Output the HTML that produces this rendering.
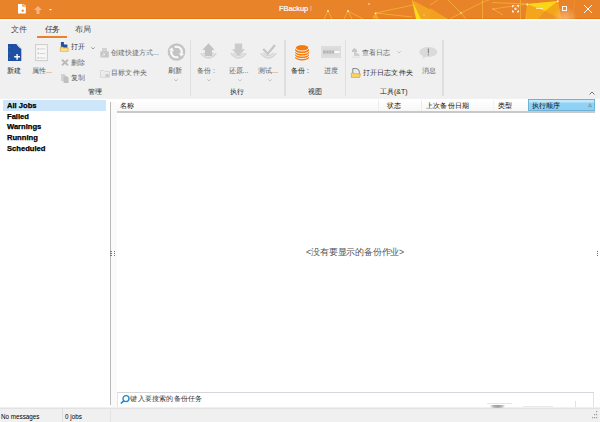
<!DOCTYPE html>
<html><head><meta charset="utf-8">
<style>
*{margin:0;padding:0;box-sizing:border-box}
html,body{width:600px;height:422px;overflow:hidden;background:#f0f0f0;font-family:"Liberation Sans",sans-serif}
.a{position:absolute;white-space:nowrap}
.t{position:absolute;white-space:nowrap;font-size:7px;line-height:8px;color:#262626}
.d{color:#666}
svg{position:absolute;overflow:visible}
i{font-style:normal;display:inline-block;width:1em;text-align:center}
</style></head><body>

<div class="a" style="left:0;top:0;width:600px;height:19px;background:linear-gradient(#e8832a 0,#e8832a 17.5px,#e77512 18.5px)"></div>
<svg style="left:0;top:0" width="600" height="19" viewBox="0 0 600 19">
  <polygon points="412,0 448,19 421,19" fill="#f3a424"/>
  <polygon points="412,0 421,19 416,19" fill="#f9dc1a"/>
  <polygon points="430,8 448,19 430,19" fill="#f2a020" opacity="0.9"/>
  <polygon points="372,18 376,13 379,19" fill="#f0a52a"/>
  <polygon points="527,4 558,1 561.5,19 525,19" fill="#f4a51c"/>
  <polygon points="545,11 561.5,19 538,19" fill="#ee9424"/>
  <polygon points="527,4 558,1 545,11" fill="#fbd614"/>
  <g stroke="#f7b834" stroke-width="0.8" fill="none" opacity="0.9">
    <path d="M324 19 L328 11 L332 19"/>
    <path d="M344 19 L348 11 L352 19"/>
    <path d="M348 11 L363 19"/>
    <path d="M376 13 L413 5"/>
    <path d="M376 13 L412 17"/>
    <path d="M448 0 L461 13 L466 19"/>
    <path d="M461 13 L450 19"/>
    <path d="M461 13 L483 2 L500 -4"/>
    <path d="M482.5 0 V19"/>
    <path d="M493 9 L527 4"/>
    <path d="M493 9 L503 15"/>
    <path d="M430 5 L438 0"/>
    <path d="M520.4 0 V19"/>
    <path d="M492 2.5 L527 4"/>
    <path d="M575 0 L572 19" opacity="0.4"/>
  </g>
  <g fill="#fff3c8">
    <circle cx="328" cy="11" r="0.9"/><circle cx="348" cy="11" r="0.9"/><circle cx="369" cy="4" r="0.8"/>
    <circle cx="375.5" cy="13.3" r="0.9"/><circle cx="461" cy="13" r="0.8"/><circle cx="424" cy="15" r="0.6"/>
    <circle cx="527.4" cy="4.4" r="1"/><circle cx="557.8" cy="1.2" r="1"/><circle cx="493" cy="9" r="0.6"/>
  </g>
</svg>
<div class="a" style="left:550px;top:4px;width:30px;height:15px;background:radial-gradient(ellipse at 50% 100%,rgba(255,215,170,0.55) 0,rgba(255,215,170,0) 60%)"></div>

<svg style="left:18.3px;top:4.3px" width="9" height="10" viewBox="0 0 9 10"><path d="M0 0H4.3V2.6H7.8V9.5H0Z" fill="#fff"/><path d="M4.9 0.4L7.8 2" stroke="#fff" stroke-width="0.8"/><rect x="3.7" y="5.7" width="2" height="2" fill="#e8832a"/></svg>
<svg style="left:34px;top:6px" width="8" height="8" viewBox="0 0 8 8"><path d="M4 0L8 4H5.5V8H2.5V4H0Z" fill="#f3b586"/></svg>
<svg style="left:48.5px;top:8.5px" width="3" height="2" viewBox="0 0 3 2"><path d="M0 0H3L1.5 1.5Z" fill="#fff"/></svg>
<div class="a" style="left:279px;top:4px;font-size:7.4px;color:#fff;line-height:9px;-webkit-text-stroke:0.2px #fff">FBackup</div>
<div class="a" style="left:310px;top:4px;font-size:7px;color:#fbd7b0;line-height:9px">!</div>

<svg style="left:512.2px;top:4.7px" width="7" height="7.5" viewBox="0 0 7 7.5"><g fill="#fff4e0"><path d="M0 0.8Q0 0 0.8 0H2V1.2H1.2V2.2H0Z"/><path d="M7 0.8Q7 0 6.2 0H5V1.2H5.8V2.2H7Z"/><path d="M0 6.7Q0 7.5 0.8 7.5H2V6.3H1.2V5.3H0Z"/><path d="M7 6.7Q7 7.5 6.2 7.5H5V6.3H5.8V5.3H7Z"/></g><circle cx="3.5" cy="3.7" r="1.2" fill="#fde8d0"/></svg>
<div class="a" style="left:536px;top:8px;width:7px;height:0.9px;background:#fef0b8;opacity:0.85"></div>
<div class="a" style="left:561.5px;top:6px;width:5.5px;height:5px;border:0.9px solid #fff6ea"></div>
<svg style="left:584px;top:5px" width="8" height="8" viewBox="0 0 8 8"><path d="M0 0L8 8M8 0L0 8" stroke="#fff" stroke-width="1"/></svg>


<div class="a" style="left:0;top:19px;width:600px;height:2.3px;background:#f6fcfd"></div>
<div class="t" style="left:11px;top:25.5px;font-size:7.5px;color:#4a4a4a"><i>文</i><i>件</i></div>
<div class="t" style="left:44.5px;top:25.5px;font-size:7.5px;color:#333"><i>任</i><i>务</i></div>
<div class="t" style="left:75px;top:25.5px;font-size:7.5px;color:#4a4a4a"><i>布</i><i>局</i></div>
<div class="a" style="left:37px;top:36px;width:30px;height:1.6px;background:#e8832a"></div>


<div class="a" style="left:189.8px;top:40px;width:1.3px;height:56px;background:#dedede"></div>
<div class="a" style="left:284.3px;top:40px;width:1.3px;height:56px;background:#dedede"></div>
<div class="a" style="left:344.9px;top:40px;width:1.3px;height:56px;background:#dedede"></div>
<div class="a" style="left:442.3px;top:40px;width:1.3px;height:56px;background:#dedede"></div>


<div class="t" style="left:88px;top:88.2px"><i>管</i><i>理</i></div>
<div class="t" style="left:229.5px;top:88.2px"><i>执</i><i>行</i></div>
<div class="t" style="left:308px;top:88.2px"><i>视</i><i>图</i></div>
<div class="t" style="left:380px;top:88.2px"><i>工</i><i>具</i>(&amp;T)</div>
<svg style="left:589px;top:91px" width="6" height="4" viewBox="0 0 6 4"><path d="M0.5 3.5L3 1L5.5 3.5" stroke="#666" stroke-width="0.9" fill="none"/></svg>


<svg style="left:7.7px;top:43.7px" width="14" height="17" viewBox="0 0 14 17"><path d="M0 0H8.5L13.3 4.8V17H0Z" fill="#1f4fa3"/><path d="M8.8 0.7L12.6 4.5" stroke="#b4ccee" stroke-width="1"/><g fill="#5784c8"><rect x="1.2" y="3" width="0.9" height="0.9"/><rect x="1.2" y="8.3" width="0.9" height="0.9"/><rect x="1.2" y="14" width="0.9" height="0.9"/></g><path d="M6.2 12.8H12M9.1 9.9V15.7" stroke="#fff" stroke-width="1.4"/></svg>
<div class="t" style="left:7px;top:66.8px"><i>新</i><i>建</i></div>

<svg style="left:35px;top:43px" width="13" height="18" viewBox="0 0 13 18"><rect x="0.6" y="1.6" width="11.8" height="16" fill="#f7f7f7" stroke="#cfcfcf" stroke-width="1.1"/><g fill="#c2c2c2"><rect x="2.6" y="5" width="1.6" height="1.6"/><rect x="2.6" y="9.6" width="1.6" height="1.6"/><rect x="2.6" y="14.1" width="1.6" height="1.6"/></g><g fill="#d4d4d4"><rect x="5" y="5.4" width="5.2" height="1"/><rect x="5" y="10" width="5.2" height="1"/><rect x="5" y="14.5" width="5.2" height="1"/></g></svg>
<div class="t d" style="left:32px;top:66.8px"><i>属</i><i>性</i>...</div>

<svg style="left:59.6px;top:42.2px" width="9" height="10" viewBox="0 0 9 10"><path d="M0.9 0H3.9V2.6H7.4V6H0.9Z" fill="#1f50a2"/><path d="M0.35 5.1H3L3.8 5.8H8.2V9.3H0.35Z" fill="#f6d46e" stroke="#e6a63a" stroke-width="0.7"/><rect x="1.2" y="7" width="6.2" height="1.6" fill="#fbe6a6"/></svg>
<div class="t" style="left:71px;top:43px"><i>打</i><i>开</i></div>
<svg style="left:91px;top:46.5px" width="4" height="2.5" viewBox="0 0 4 2.5"><path d="M0.3 0.3L2 2L3.7 0.3" stroke="#777" stroke-width="0.7" fill="none"/></svg>

<svg style="left:60.5px;top:59px" width="8" height="7" viewBox="0 0 8 7"><path d="M1 0.8L7 6.2M7 0.8L1 6.2" stroke="#b9b9b9" stroke-width="1.9"/></svg>
<div class="t d" style="left:71px;top:58.5px"><i>删</i><i>除</i></div>

<svg style="left:61px;top:73.5px" width="8" height="9" viewBox="0 0 8 9"><path d="M0 0H3.5L4.5 1V7H0Z" fill="#d2d2d2"/><path d="M2.5 2.2H6L7.5 3.7V9H2.5Z" fill="#bfbfbf"/></svg>
<div class="t d" style="left:71px;top:73.8px"><i>复</i><i>制</i></div>

<svg style="left:100px;top:48px" width="9" height="10" viewBox="0 0 9 10"><rect x="2" y="0" width="5" height="4" fill="#d2d2d2"/><rect x="0.3" y="3.5" width="8.5" height="6" fill="#c6c6c6"/><path d="M1.8 8.5L4.5 5.8M3 5.8H4.5V7.3" stroke="#f4f4f4" stroke-width="0.8" fill="none"/></svg>
<div class="t d" style="left:111px;top:48.6px"><i>创</i><i>建</i><i>快</i><i>捷</i><i>方</i><i>式</i>...</div>

<svg style="left:99.5px;top:70px" width="10" height="8" viewBox="0 0 10 8"><path d="M0.5 0.5H3.8L4.8 1.5H9.5V7.3H0.5Z" fill="#ececec" stroke="#d4d4d4" stroke-width="0.9"/><rect x="5.5" y="4" width="3.2" height="2.8" fill="#c8c8c8"/></svg>
<div class="t d" style="left:111px;top:68.6px;font-size:7.2px"><i>目</i><i>标</i><i>文</i><i>件</i><i>夹</i></div>

<svg style="left:166.5px;top:43px" width="19" height="18" viewBox="0 0 19 18"><circle cx="9.5" cy="9" r="8.8" fill="#c4c4c4"/><path d="M7.69 4.02A5.3 5.3 0 0 1 14.62 10.37" stroke="#fafafa" stroke-width="2" fill="none"/><path d="M17.13 11.04L12.11 9.70L13.79 13.46Z" fill="#fafafa"/><path d="M11.31 13.98A5.3 5.3 0 0 1 4.38 7.63" stroke="#fafafa" stroke-width="2" fill="none"/><path d="M1.87 6.96L6.89 8.30L5.21 4.54Z" fill="#fafafa"/></svg>
<div class="t" style="left:168px;top:66.8px;color:#555"><i>刷</i><i>新</i></div>
<svg style="left:173.5px;top:78.5px" width="4" height="2.5" viewBox="0 0 4 2.5"><path d="M0.3 0.3L2 2L3.7 0.3" stroke="#999" stroke-width="0.6" fill="none"/></svg>


<svg style="left:200px;top:43px" width="17" height="17" viewBox="0 0 17 17"><path d="M0.8 10.2Q8.5 19.5 16.2 10.2" stroke="#d6d6d6" stroke-width="1.8" fill="none"/><path d="M3.2 10Q8.5 15.3 13.8 10" stroke="#d6d6d6" stroke-width="1.4" fill="none"/><path d="M8.5 0.3L14.6 7H12.1V13H4.9V7H2.4Z" fill="#c2c2c2"/></svg>
<div class="t d" style="left:197px;top:66.8px"><i>备</i><i>份</i> :</div>
<svg style="left:206.5px;top:79px" width="4" height="2.5" viewBox="0 0 4 2.5"><path d="M0.3 0.3L2 2L3.7 0.3" stroke="#aaa" stroke-width="0.6" fill="none"/></svg>

<svg style="left:230px;top:43px" width="17" height="17" viewBox="0 0 17 17"><path d="M0.8 10.2Q8.5 19.5 16.2 10.2" stroke="#d6d6d6" stroke-width="1.8" fill="none"/><path d="M3.2 10Q8.5 15.3 13.8 10" stroke="#d6d6d6" stroke-width="1.4" fill="none"/><path d="M8.5 13.3L14.9 6.3H12.2V0.5H4.8V6.3H2.1Z" fill="#cbcbcb"/></svg>
<div class="t d" style="left:228.5px;top:66.8px"><i>还</i><i>原</i>...</div>
<svg style="left:238px;top:79px" width="4" height="2.5" viewBox="0 0 4 2.5"><path d="M0.3 0.3L2 2L3.7 0.3" stroke="#aaa" stroke-width="0.6" fill="none"/></svg>

<svg style="left:260px;top:43px" width="17" height="17" viewBox="0 0 17 17"><path d="M0.8 10.2Q8.5 19.5 16.2 10.2" stroke="#d6d6d6" stroke-width="1.8" fill="none"/><path d="M3.2 10Q8.5 15.3 13.8 10" stroke="#d6d6d6" stroke-width="1.4" fill="none"/><path d="M3.2 6L7.8 10.8L15 2" stroke="#c6c6c6" stroke-width="2.3" fill="none"/></svg>
<div class="t d" style="left:258px;top:66.8px"><i>测</i><i>试</i>...</div>
<svg style="left:267.5px;top:79px" width="4" height="2.5" viewBox="0 0 4 2.5"><path d="M0.3 0.3L2 2L3.7 0.3" stroke="#aaa" stroke-width="0.6" fill="none"/></svg>


<svg style="left:295.3px;top:43.5px" width="15" height="17" viewBox="0 0 15 17"><rect x="0.2" y="4" width="13.8" height="9.5" fill="#f47a12"/><ellipse cx="7.1" cy="13.5" rx="6.9" ry="3" fill="#f47a12"/><path d="M0.2 6.8A6.9 2.8 0 0 0 14 6.8" stroke="#fff" stroke-width="0.9" fill="none"/><path d="M0.2 9.3A6.9 2.8 0 0 0 14 9.3" stroke="#fff" stroke-width="0.9" fill="none"/><path d="M0.2 11.8A6.9 2.8 0 0 0 14 11.8" stroke="#fff" stroke-width="0.9" fill="none"/><ellipse cx="7.1" cy="3.8" rx="6.7" ry="3.2" fill="#f47a12" stroke="#fff" stroke-width="0.9"/></svg>
<div class="t" style="left:291px;top:67px;color:#222"><i>备</i><i>份</i> :</div>

<svg style="left:321px;top:46px" width="20" height="12" viewBox="0 0 20 12"><rect x="0" y="0" width="20" height="12" fill="#dadada"/><rect x="1" y="1" width="18" height="10" fill="none" stroke="#e2e2e2" stroke-width="0.8"/><rect x="2" y="4.5" width="11" height="3" fill="#b4b4b4"/><g fill="#d0d0d0"><rect x="4.5" y="4.5" width="0.8" height="3"/><rect x="7.5" y="4.5" width="0.8" height="3"/><rect x="10.5" y="4.5" width="0.8" height="3"/></g><rect x="13.5" y="5" width="5" height="2" fill="#fafafa"/></svg>
<div class="t" style="left:323.5px;top:67px;color:#666"><i>进</i><i>度</i></div>


<svg style="left:350.7px;top:47.8px" width="10" height="10" viewBox="0 0 10 10"><path d="M1 2L3.5 0L6 2V4H1Z" fill="#c6c6c6"/><path d="M3 3L8.5 6.5V8H3Z" fill="#cfcfcf"/><rect x="1" y="8.7" width="8" height="0.8" fill="#dddddd"/></svg>
<div class="t d" style="left:361.5px;top:49px"><i>查</i><i>看</i><i>日</i><i>志</i></div>
<svg style="left:396.5px;top:51px" width="4" height="2.5" viewBox="0 0 4 2.5"><path d="M0.3 0.3L2 2L3.7 0.3" stroke="#aaa" stroke-width="0.6" fill="none"/></svg>

<svg style="left:350.7px;top:68.2px" width="10" height="10" viewBox="0 0 10 10"><path d="M1.8 0.5H5Q8.4 0.5 8.4 4.2V6.5H1.8Z" fill="#e6ecf6" stroke="#707070" stroke-width="0.8"/><path d="M0.4 5H3L3.8 5.8H9.4L8.7 9.4H0.4Z" fill="#f8d468" stroke="#e3a436" stroke-width="0.8"/></svg>
<div class="t" style="left:362.5px;top:69px;font-size:7.2px"><i>打</i><i>开</i><i>日</i><i>志</i><i>文</i><i>件</i><i>夹</i></div>

<svg style="left:419px;top:47px" width="19" height="12" viewBox="0 0 19 12"><ellipse cx="9.3" cy="5" rx="9" ry="5" fill="#dadada"/><path d="M4 8L3.5 11.5L8 9.5Z" fill="#dadada"/><rect x="8.8" y="1.5" width="1.2" height="4.8" fill="#8a8a8a"/><rect x="8.8" y="7.2" width="1.2" height="1.2" fill="#8a8a8a"/></svg>
<div class="t" style="left:421.5px;top:67px;font-size:7px;color:#5a5a5a"><i>消</i><i>息</i></div>


<div class="a" style="left:0;top:97.5px;width:600px;height:2px;background:linear-gradient(#f0f0f0,#f6f6f6)"></div>
<div class="a" style="left:0;top:99.3px;width:600px;height:308.2px;background:#fff"></div>
<div class="a" style="left:3px;top:100.4px;width:103.3px;height:10.4px;background:#cde6fa"></div>
<div class="a" style="left:7px;top:100.9px;font-size:7.6px;font-weight:bold;line-height:9px;color:#000;-webkit-text-stroke:0.25px #000">All Jobs</div>
<div class="a" style="left:7px;top:111.6px;font-size:7.6px;font-weight:bold;line-height:9px;color:#000;-webkit-text-stroke:0.25px #000">Failed</div>
<div class="a" style="left:7px;top:122.3px;font-size:7.6px;font-weight:bold;line-height:9px;color:#000;-webkit-text-stroke:0.25px #000">Warnings</div>
<div class="a" style="left:7px;top:133px;font-size:7.6px;font-weight:bold;line-height:9px;color:#000;-webkit-text-stroke:0.25px #000">Running</div>
<div class="a" style="left:7px;top:143.7px;font-size:7.6px;font-weight:bold;line-height:9px;color:#000;-webkit-text-stroke:0.25px #000">Scheduled</div>


<div class="a" style="left:110px;top:102px;width:1px;height:303px;background:#b9b9b9"></div>
<div class="a" style="left:111px;top:102px;width:6px;height:305px;background:#fafafa"></div>
<div class="a" style="left:109.5px;top:251px;width:2px;height:6px;background:repeating-linear-gradient(#777 0 1px,transparent 1px 2.2px)"></div>
<div class="a" style="left:113.5px;top:251px;width:1.5px;height:5px;background:repeating-linear-gradient(#777 0 1px,transparent 1px 2px)"></div>
<div class="a" style="left:596.5px;top:251px;width:1.5px;height:5px;background:repeating-linear-gradient(#666 0 1px,transparent 1px 2px)"></div>


<div class="a" style="left:117px;top:99.5px;width:477px;height:11.5px;background:linear-gradient(#fff,#f7f7f7)"></div>
<div class="a" style="left:117px;top:111.2px;width:477.7px;height:1.5px;background:#c9c9c9"></div>
<div class="a" style="left:378px;top:100px;width:1px;height:11px;background:#ededed"></div>
<div class="a" style="left:421px;top:100px;width:1px;height:11px;background:#ececec"></div>
<div class="a" style="left:493px;top:100px;width:1px;height:11px;background:#f3f3f3"></div>
<div class="a" style="left:528.2px;top:99.3px;width:66.5px;height:12px;background:linear-gradient(#c2e8fb 0,#c2e8fb 22%,#92d3f4 28%,#8cd0f3 100%);border:1px solid #6fb2d8"></div>
<div class="t" style="left:120px;top:101.5px;color:#0a0a0a"><i>名</i><i>称</i></div>
<div class="t" style="left:386.5px;top:101.5px;color:#0a0a0a"><i>状</i><i>态</i></div>
<div class="t" style="left:425.5px;top:101.5px;font-size:7.3px;color:#0a0a0a"><i>上</i><i>次</i><i>备</i><i>份</i><i>日</i><i>期</i></div>
<div class="t" style="left:498px;top:101.5px;color:#0a0a0a"><i>类</i><i>型</i></div>
<div class="t" style="left:531.5px;top:101.5px;color:#0a0a0a"><i>执</i><i>行</i><i>顺</i><i>序</i></div>
<svg style="left:588px;top:103px" width="4" height="4" viewBox="0 0 4 4"><path d="M0.4 3.6L2 0.6L3.6 3.6Z" stroke="#7a8a94" stroke-width="0.7" fill="none"/></svg>

<div class="t" style="left:306px;top:247px;font-size:8.8px;line-height:10px;color:#555">&lt;<i>没</i><i>有</i><i>要</i><i>显</i><i>示</i><i>的</i><i>备</i><i>份</i><i>作</i><i>业</i>&gt;</div>


<div class="a" style="left:117px;top:392px;width:477px;height:15px;border:1px solid #d6d6dc;border-right-color:#e2e2e2;border-left-color:#e6e6e6;border-bottom:none;background:#fff"></div>
<svg style="left:120px;top:394.5px" width="10" height="9" viewBox="0 0 10 9"><circle cx="6" cy="3.6" r="3" stroke="#1e88c8" stroke-width="1.3" fill="none"/><path d="M3.8 5.8L0.8 8.5" stroke="#1e88c8" stroke-width="1.6"/></svg>
<div class="t" style="left:130.3px;top:395px;font-size:7.2px;color:#333"><i>键</i><i>入</i><i>要</i><i>搜</i><i>索</i><i>的</i><i>备</i><i>份</i><i>任</i><i>务</i></div>

<div class="a" style="left:487px;top:403.3px;width:25px;height:0.8px;background:#e6e6e6"></div>
<div class="a" style="left:490px;top:404.5px;width:15px;height:4px;border-radius:0 0 50% 50%;background:radial-gradient(ellipse at 50% 20%,#999 0,#b4b4b4 40%,rgba(200,200,200,0) 75%)"></div>
<div class="a" style="left:523px;top:405.5px;width:30px;height:0.8px;background:#e8e8e8"></div>
<div class="a" style="left:575px;top:401px;width:0.8px;height:5.5px;background:#e2e2e2"></div>

<div class="a" style="left:0;top:407.5px;width:600px;height:14.5px;background:#f0f0f0;border-top:1px solid #e2e2e2"></div>
<div class="a" style="left:62px;top:408px;width:1px;height:14px;background:#dedede"></div>
<div class="a" style="left:110px;top:408px;width:1px;height:14px;background:#e4e4e4"></div>
<div class="a" style="left:1px;top:411.7px;font-size:6.3px;line-height:9px;color:#000">No messages</div>
<div class="a" style="left:65px;top:411.7px;font-size:6.3px;line-height:9px;color:#000">0 jobs</div>
<svg style="left:591px;top:411px" width="7" height="8" viewBox="0 0 7 8"><g fill="#999"><rect x="5" y="0" width="1.2" height="1.2"/><rect x="3" y="3" width="1.2" height="1.2"/><rect x="5" y="3" width="1.2" height="1.2"/><rect x="1" y="6" width="1.2" height="1.2"/><rect x="3" y="6" width="1.2" height="1.2"/><rect x="5" y="6" width="1.2" height="1.2"/></g></svg>
</body></html>
